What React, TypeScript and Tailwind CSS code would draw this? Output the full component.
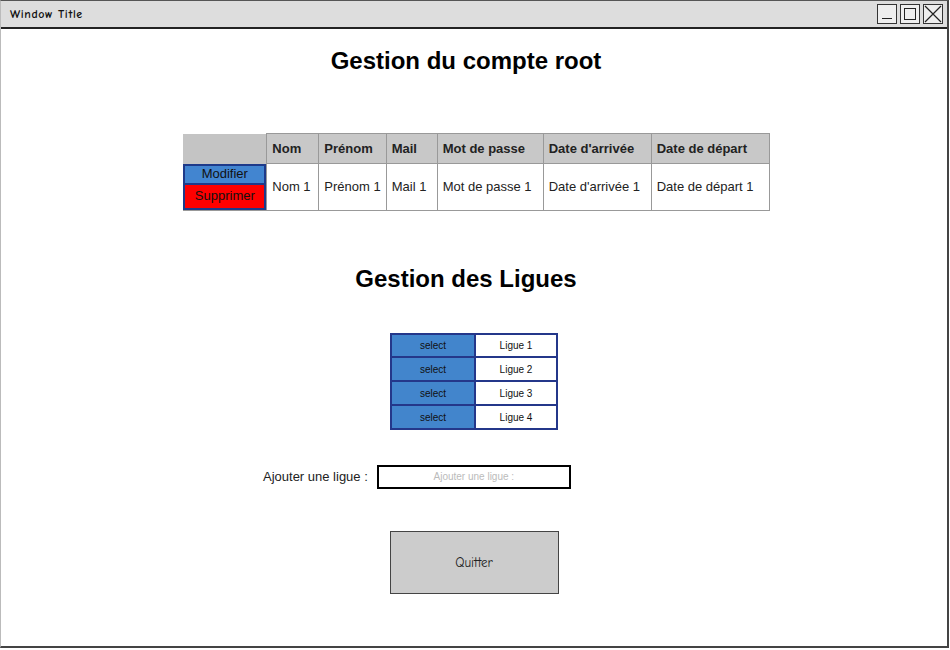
import React from "react";

const font = { fontFamily: '"Liberation Sans", Arial, sans-serif' };
const sketch = { fontFamily: '"Comic Neue", "Comic Sans MS", "DejaVu Sans", sans-serif' };

export default function App() {
  const headers = [
    { t: "Nom", w: "w-[52px]" },
    { t: "Prénom", w: "w-[66px]" },
    { t: "Mail", w: "w-[51px]" },
    { t: "Mot de passe", w: "w-[106px]" },
    { t: "Date d'arrivée", w: "w-[108px]" },
    { t: "Date de départ", w: "w-[118px]" },
  ];
  const cells = ["Nom 1", "Prénom 1", "Mail 1", "Mot de passe 1", "Date d'arrivée 1", "Date de départ 1"];
  return (
    <div className="w-[950px] h-[650px] bg-white" style={font}>
      <div className="w-[949px] h-[648px] flex flex-col border-t border-t-[#555] border-l border-l-[#bbb] border-r-2 border-r-[#444] border-b-2 border-b-[#444]">
        <div className="h-[28px] shrink-0 bg-[#dddddd] border-b-2 border-[#222] flex items-center justify-between pl-[9px] pr-[4px]">
          <span className="text-[12px] font-bold text-[#111] tracking-[0.6px]" style={sketch}>Window Title</span>
          <div className="flex gap-[3px]">
            <div className="w-[20px] h-[20px] border border-[#333] bg-[#eee] flex items-end justify-center pb-[4px]">
              <div className="w-[10px] h-[1px] bg-[#222]" />
            </div>
            <div className="w-[20px] h-[20px] border border-[#333] bg-[#eee] flex items-center justify-center">
              <div className="w-[12px] h-[12px] border border-[#222]" />
            </div>
            <div className="w-[20px] h-[20px] border border-[#333] bg-[#eee] flex items-center justify-center">
              <svg width="18" height="18" viewBox="0 0 18 18">
                <path d="M1 1 L17 17 M17 1 L1 17" stroke="#222" strokeWidth="1.2" />
              </svg>
            </div>
          </div>
        </div>

        <div className="flex flex-col items-center">
          <h1 className="mt-[18px] pr-[16px] text-[24px] leading-[28px] font-bold text-black">Gestion du compte root</h1>

          <table className="mt-[58px] ml-[5px] border-collapse text-[13px] text-[#222]">
            <thead>
              <tr className="h-[30px] bg-[#c8c8c8]">
                <th className="w-[83px] p-0 bg-[#c4c4c4] border-r border-[#999]" />
                {headers.map((h) => (
                  <th key={h.t} className={`${h.w} border border-[#999] px-[5px] text-left font-bold`}>
                    {h.t}
                  </th>
                ))}
              </tr>
            </thead>
            <tbody>
              <tr className="h-[47px]">
                <td className="p-0 align-top border-b border-[#999]">
                  <div className="flex flex-col w-[83px] border-2 border-[#1e3a8a] text-[13px]">
                    <div className="h-[19px] bg-[#4285d0] border-b-2 border-[#1e3a8a] flex items-center justify-center text-[#111]">Modifier</div>
                    <div className="h-[23px] bg-[#ff0000] flex items-center justify-center text-[#111]">Supprimer</div>
                  </div>
                </td>
                {cells.map((c) => (
                  <td key={c} className="border border-[#999] px-[5px] whitespace-nowrap">
                    {c}
                  </td>
                ))}
              </tr>
            </tbody>
          </table>

          <h2 className="mt-[54px] pr-[16px] text-[24px] leading-[28px] font-bold text-black">Gestion des Ligues</h2>

          <div className="mt-[40px] w-[168px] border-2 border-[#24378a] bg-[#24378a] flex flex-col gap-[2px] text-[10px] text-[#111]">
            {["Ligue 1", "Ligue 2", "Ligue 3", "Ligue 4"].map((l, i) => (
              <div key={l} className={`flex gap-[2px] ${i === 0 ? "h-[21px]" : "h-[22px]"}`}>
                <div className="w-[82px] bg-[#4285cc] flex items-center justify-center">select</div>
                <div className="flex-1 bg-white flex items-center justify-center">{l}</div>
              </div>
            ))}
          </div>

          <div className="mt-[35px] self-start pl-[262px] flex items-center">
            <span className="text-[13px] text-[#222]">Ajouter une ligue :</span>
            <div className="ml-[9px] w-[194px] h-[24px] border-2 border-black flex items-center justify-center text-[10px] leading-none text-[#bbb]">
              Ajouter une ligue :
            </div>
          </div>

          <button className="mt-[42px] w-[169px] h-[63px] bg-[#cccccc] border border-[#444] text-[13px] text-[#222]" style={sketch}>
            Quitter
          </button>
        </div>
      </div>
    </div>
  );
}
